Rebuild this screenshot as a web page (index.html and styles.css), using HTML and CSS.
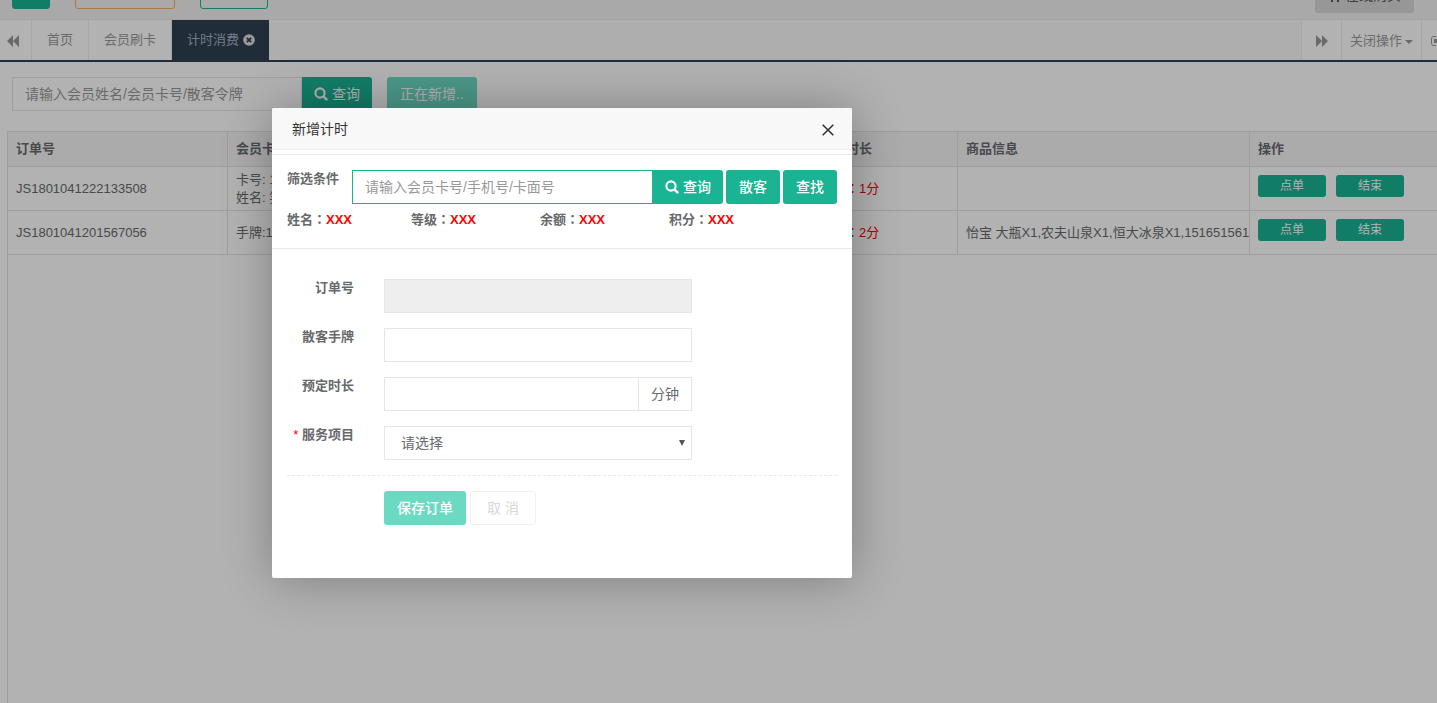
FILE: index.html
```html
<!DOCTYPE html>
<html lang="zh-CN">
<head>
<meta charset="utf-8">
<title>计时消费</title>
<link rel="stylesheet" href="styles.css">
</head>
<body>
<div class="page">
  <header class="topbar">
    <button class="top-btn top-btn-menu" type="button" aria-label="菜单"></button>
    <button class="top-btn top-btn-warning" type="button" aria-label="快捷操作"></button>
    <button class="top-btn top-btn-outline" type="button" aria-label="刷新"></button>
    <button class="top-btn top-btn-buy" type="button">
      <svg class="icon" viewBox="0 0 14 14"><path d="M4 1v13M10 1v13M1 5h12" fill="none" stroke="currentColor" stroke-width="2"/></svg>
      在线购买
    </button>
  </header>

  <nav class="tabs">
    <button class="tab-tool tab-prev" type="button" aria-label="向左">
      <svg class="icon-arrows" viewBox="0 0 14 12"><path d="M7 0v12L1 6zM13 0v12L7 6z" fill="currentColor"/></svg>
    </button>
    <a class="tab" href="#">首页</a>
    <a class="tab" href="#">会员刷卡</a>
    <a class="tab tab-active" href="#">计时消费
      <svg class="icon-close" viewBox="0 0 12 12"><circle cx="6" cy="6" r="5.8" fill="currentColor"/><path d="M3.8 3.8l4.4 4.4M8.2 3.8L3.8 8.2" stroke="#2f4050" stroke-width="1.8"/></svg>
    </a>
    <span class="tab-space"></span>
    <button class="tab-tool tab-next" type="button" aria-label="向右">
      <svg class="icon-arrows" viewBox="0 0 14 12"><path d="M1 0v12l6-6zM7 0v12l6-6z" fill="currentColor"/></svg>
    </button>
    <button class="tab-tool tab-menu" type="button">关闭操作<span class="caret"></span></button>
    <button class="tab-tool tab-exit" type="button" aria-label="退出">
      <svg class="icon-exit" viewBox="0 0 14 12"><path d="M6 1.5H3.5a2 2 0 0 0-2 2v5a2 2 0 0 0 2 2H6" fill="none" stroke="currentColor"/><path d="M4 4h4V1l5 5-5 5V8H4z" fill="currentColor"/></svg>
    </button>
  </nav>

  <main class="content">
    <div class="toolbar">
      <div class="toolbar-field">
        <input class="input" type="text" placeholder="请输入会员姓名/会员卡号/散客令牌" aria-label="会员查询">
      </div>
      <button class="btn btn-primary btn-joined" type="button">
        <svg class="icon-search" viewBox="0 0 14 14"><circle cx="6" cy="6" r="4.6" fill="none" stroke="currentColor" stroke-width="2.1"/><path d="M9.6 9.6l2.8 2.8" stroke="currentColor" stroke-width="2.5" stroke-linecap="round"/></svg>
        查询
      </button>
      <button class="btn btn-primary btn-adding" type="button" disabled>正在新增..</button>
    </div>

    <div class="table-box">
      <table class="orders">
        <colgroup><col class="col-id"><col class="col-member"><col class="col-time"><col class="col-goods"><col></colgroup>
        <thead>
          <tr><th>订单号</th><th>会员卡号</th><th>已用时长</th><th>商品信息</th><th>操作</th></tr>
        </thead>
        <tbody>
          <tr>
            <td>JS1801041222133508</td>
            <td>卡号: 1<br>姓名: 笑</td>
            <td class="danger">消费<span class="colon" lang="zh-TW">：</span>1分</td>
            <td></td>
            <td class="actions"><div class="action-row"><button class="btn-small" type="button">点单</button><button class="btn-small" type="button">结束</button></div></td>
          </tr>
          <tr>
            <td>JS1801041201567056</td>
            <td>手牌:1</td>
            <td class="danger">消费<span class="colon" lang="zh-TW">：</span>2分</td>
            <td>怡宝 大瓶X1,农夫山泉X1,恒大冰泉X1,1516515616</td>
            <td class="actions"><div class="action-row"><button class="btn-small" type="button">点单</button><button class="btn-small" type="button">结束</button></div></td>
          </tr>
        </tbody>
      </table>
    </div>
  </main>
</div>

<div class="shade">
  <section class="dialog" role="dialog" aria-labelledby="dialog-title">
    <header class="dialog-head">
      <h2 class="dialog-title" id="dialog-title">新增计时</h2>
      <button class="dialog-close" type="button" aria-label="关闭">
        <svg class="icon-x" viewBox="0 0 12 12"><path d="M.7.7l10.6 10.6M11.3.7L.7 11.3" stroke="#2d2c3b" stroke-width="1.5"/></svg>
      </button>
    </header>
    <div class="dialog-body">
      <div class="filter">
        <label class="label" for="filter">筛选条件</label>
        <div class="filter-controls">
          <div class="filter-group">
            <input class="input input-focus" id="filter" type="text" placeholder="请输入会员卡号/手机号/卡面号">
            <button class="btn btn-primary btn-joined strong" type="button">
              <svg class="icon-search" viewBox="0 0 14 14"><circle cx="6" cy="6" r="4.6" fill="none" stroke="currentColor" stroke-width="2.1"/><path d="M9.6 9.6l2.8 2.8" stroke="currentColor" stroke-width="2.5" stroke-linecap="round"/></svg>
              查询
            </button>
          </div>
          <button class="btn btn-primary strong" type="button">散客</button>
          <button class="btn btn-primary strong" type="button">查找</button>
        </div>
      </div>
      <div class="stats">
        <div>姓名<span class="colon" lang="zh-TW">：</span><span class="value">XXX</span></div>
        <div>等级<span class="colon" lang="zh-TW">：</span><span class="value">XXX</span></div>
        <div>余额<span class="colon" lang="zh-TW">：</span><span class="value">XXX</span></div>
        <div>积分<span class="colon" lang="zh-TW">：</span><span class="value">XXX</span></div>
      </div>
    </div>
    <form class="form">
      <div class="field">
        <label class="label" for="order">订单号</label>
        <input class="input" id="order" type="text" disabled>
      </div>
      <div class="field">
        <label class="label" for="hand">散客手牌</label>
        <input class="input" id="hand" type="text">
      </div>
      <div class="field">
        <label class="label" for="length">预定时长</label>
        <div class="addon-group">
          <input class="input" id="length" type="text">
          <span class="addon">分钟</span>
        </div>
      </div>
      <div class="field">
        <label class="label" for="service"><span class="required">*</span> 服务项目</label>
        <div class="select-box">
          <select class="input select" id="service"><option>请选择</option></select>
          <span class="select-arrow"></span>
        </div>
      </div>
      <div class="form-foot">
        <button class="btn btn-primary btn-save strong" type="button" disabled>保存订单</button>
        <button class="btn btn-cancel" type="button" disabled>取 消</button>
      </div>
    </form>
  </section>
</div>
</body>
</html>
```

FILE: styles.css
```css
* { box-sizing: border-box; }

html, body { height: 100%; }

body {
  margin: 0;
  overflow: hidden;
  font: 13px/18px "Liberation Sans", "Noto Sans CJK SC", sans-serif;
  color: #676a6c;
  background: #fff;
}

button, input, select { font: inherit; margin: 0; }

a { color: inherit; text-decoration: none; }

.page { height: 100%; display: flex; flex-direction: column; }

.colon { font-family: "Noto Sans CJK TC", sans-serif; line-height: 1; }

/* top bar */
.topbar {
  flex: none;
  display: flex;
  align-items: flex-end;
  gap: 25px;
  height: 20px;
  padding: 0 23px 10px 12px;
  overflow: hidden;
  background: #f3f3f4;
  border-bottom: 1px solid #e7eaec;
}
.top-btn { flex: none; height: 34px; padding: 0; border: 1px solid #1ab394; border-radius: 3px; background: transparent; }
.top-btn-menu { width: 38px; background: #1ab394; }
.top-btn-warning { width: 100px; border-color: #f8ac59; }
.top-btn-outline { width: 68px; }
.top-btn-buy {
  display: flex;
  align-items: center;
  justify-content: center;
  gap: 3px;
  width: 99px;
  height: 36px;
  margin: 0 0 -4px auto;
  border-color: #d8d8d8;
  background: #d8d8d8;
  color: #555;
  font-size: 14px;
}
.icon { width: 14px; height: 14px; }

/* tab strip */
.tabs {
  flex: none;
  display: flex;
  height: 42px;
  overflow: hidden;
  background: #fafafa;
  border-bottom: 2px solid #2f4050;
  color: #999;
  line-height: 40px;
}
.tab { flex: none; padding: 0 15px; border-right: 1px solid #eee; background: #fff; }
.tab-active { display: flex; align-items: center; gap: 4px; padding: 0 14px 0 15px; border: 0; background: #2f4050; color: #a7b1c2; }
.icon-close { width: 12px; height: 12px; color: #ddd; }
.tab-space { flex: 1; }
.tab-tool {
  flex: none;
  display: flex;
  align-items: center;
  justify-content: center;
  padding: 2px 0 0;
  border: 0;
  border-left: 1px solid #eee;
  background: #fff;
  color: #999;
}
.tab-prev { width: 32px; padding-right: 6px; border-left: 0; border-right: 1px solid #eee; }
.tab-next { width: 40px; }
.tab-menu { width: 80px; gap: 3px; }
.tab-exit { width: 16px; justify-content: flex-start; padding-left: 8px; overflow: hidden; }
.icon-arrows { width: 14px; height: 12px; }
.icon-exit { flex: none; width: 14px; height: 12px; }
.caret { border: 4px solid transparent; border-top-color: currentColor; border-bottom: 0; margin-top: 2px; }

/* content */
.content { flex: 1; display: flex; flex-direction: column; min-height: 0; padding: 15px 0 0 7px; }
.toolbar { display: flex; padding-left: 5px; margin-bottom: 20px; }
.toolbar-field { flex: none; width: 290px; }

.input {
  display: block;
  width: 100%;
  height: 34px;
  padding: 6px 12px;
  border: 1px solid #e5e6e7;
  border-radius: 0;
  background: #fff;
  color: inherit;
  font-size: 14px;
  line-height: 20px;
  outline: 0;
}
.input::placeholder { color: #999; opacity: 1; }
.input:disabled { background: #eee; }
.input-focus { border-color: #1ab394; }

.btn {
  flex: none;
  display: flex;
  align-items: center;
  justify-content: center;
  gap: 4px;
  height: 34px;
  padding: 0 13px;
  border: 0;
  border-radius: 3px;
  font-size: 14px;
  line-height: 20px;
}
.btn-primary { background: #1ab394; color: #fff; }
.btn-joined { padding: 0 12px; border-radius: 0 3px 3px 0; }
.btn-adding { width: 90px; padding: 0; margin-left: 15px; background: #6cdac3; }
.strong { font-weight: 500; }
.icon-search { width: 14px; height: 14px; }

.table-box { flex: 1; overflow: hidden; border: 1px solid #e3e3e3; border-width: 1px 0 0 1px; }
.orders { width: 100%; table-layout: fixed; border-collapse: separate; border-spacing: 0; }
.col-id { width: 220px; }
.col-member { width: 584px; }
.col-time { width: 146px; }
.col-goods { width: 292px; }
.orders th, .orders td {
  padding: 0 0 0 8px;
  border: 0 solid #e3e3e3;
  border-width: 0 1px 1px 0;
  text-align: left;
  white-space: nowrap;
  overflow: hidden;
}
.orders th { height: 35px; background: #f5f5f6; font-weight: bold; }
.orders td { height: 44px; }
.orders th:last-child, .orders td:last-child { border-right: 0; }
.orders .danger { color: red; }
.orders .actions { vertical-align: top; }
.action-row { display: flex; gap: 10px; padding-top: 8px; }
.btn-small { width: 68px; height: 22px; padding: 0; border: 0; border-radius: 3px; background: #1ab394; color: #fff; font-size: 12px; }

/* dialog */
.shade {
  position: absolute;
  inset: 0;
  display: flex;
  align-items: flex-start;
  padding: 108px 0 0 272px;
  overflow: hidden;
  background: rgba(0, 0, 0, .3);
}
.dialog {
  width: 580px;
  padding-bottom: 53px;
  border-radius: 2px;
  background: #fff;
  box-shadow: 1px 1px 50px rgba(0, 0, 0, .3);
}
.dialog-head {
  display: flex;
  align-items: center;
  justify-content: space-between;
  height: 42px;
  padding: 0 18px 0 20px;
  border-bottom: 1px solid #eee;
  border-radius: 2px 2px 0 0;
  background: #f8f8f8;
}
.dialog-title { margin: 0; color: #333; font-size: 14px; font-weight: normal; }
.dialog-close { display: flex; padding: 2px 0 0; border: 0; background: none; }
.icon-x { width: 12px; height: 12px; }
.dialog-body { margin-top: 4px; padding: 15px 15px 19px; border: 1px solid #e7eaec; border-width: 1px 0; }
.label { font-weight: bold; }
.filter { display: flex; gap: 13px; }
.filter-controls { flex: 1; display: flex; gap: 3px; }
.filter-group { flex: 1; display: flex; }
.stats { display: grid; grid-template-columns: 124px 129px 129px 1fr; margin-top: 7px; font-weight: bold; }
.value { color: red; }

.form { padding: 30px 15px 0; }
.field { display: grid; grid-template-columns: 67px 56%; column-gap: 30px; margin-bottom: 15px; }
.field .label { text-align: right; white-space: nowrap; }
.required { color: red; font-weight: normal; }
.addon-group { display: flex; }
.addon { flex: none; width: 53px; border: 1px solid #e5e6e7; border-left: 0; font-size: 14px; line-height: 32px; text-align: center; }
.select-box { position: relative; }
.select { appearance: none; padding: 6px 16px; }
.select-arrow {
  position: absolute;
  top: 14px;
  right: 7px;
  border: 3px solid transparent;
  border-top: 6px solid #555;
  border-bottom: 0;
}
.form-foot { display: flex; gap: 4px; padding: 15px 0 0 97px; border-top: 1px dashed #e7eaec; }
.btn-save { background: #6cdac3; }
.btn-cancel { width: 66px; padding: 0; border: 1px solid #f1f1f1; background: #fff; color: #d8d8d8; }
```
